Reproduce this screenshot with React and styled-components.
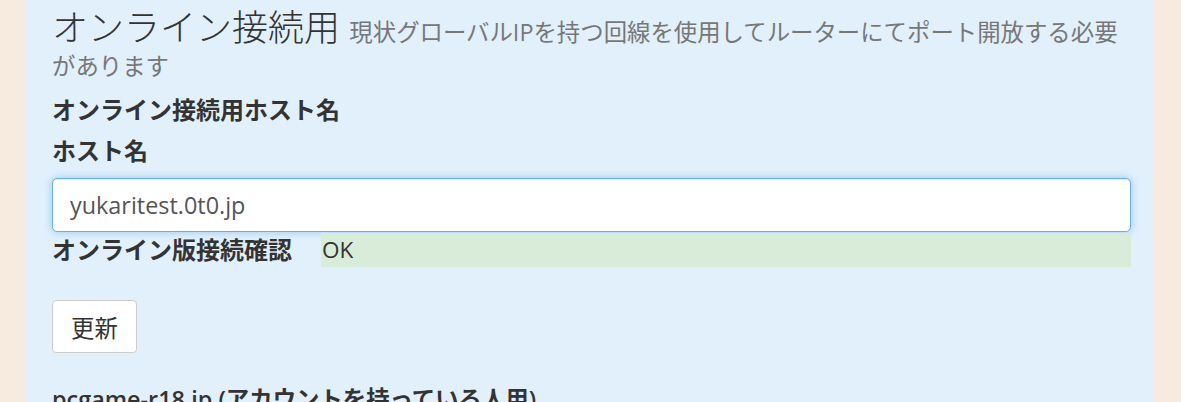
import React, { useEffect, useRef } from "react"
import styled, { createGlobalStyle } from 'styled-components'

const GlobalStyle = createGlobalStyle`
  body {
    margin: 0;
    background: #f7ebe0;
    font-family: "Open Sans", "Noto Sans CJK JP", sans-serif;
    color: #333;
  }
`

const Page = styled.div`
  padding: 0 28px 0 26px;
  height: 402px;
  overflow: hidden;
`

const Panel = styled.section`
  background: #e2f0fc;
  padding: 6px 22px 40px 26px;
  min-height: 402px;
  box-sizing: border-box;
`

const Title = styled.h1`
  margin: 0;
  font-size: 36px;
  font-weight: 300;
  line-height: 30px;
  padding-top: 7px;
  color: #333;
`

const Small = styled.small`
  font-size: 23.4px;
  color: #777;
  font-weight: 400;
`

const SectionLabel = styled.div`
  margin-top: 13px;
  font-size: 24px;
  font-weight: 700;
  line-height: 32px;
`

const FieldLabel = styled.label`
  display: block;
  margin-top: 9px;
  font-size: 24px;
  font-weight: 700;
  line-height: 32px;
`

const HostInput = styled.input`
  display: block;
  box-sizing: border-box;
  width: 100%;
  height: 54px;
  margin-top: 11px;
  padding: 10px 17px;
  font-family: "Open Sans", "Noto Sans CJK JP", sans-serif;
  font-size: 23.4px;
  color: #555;
  background: #fff;
  border: 1px solid #66afe9;
  border-radius: 5px;
  outline: none;
  caret-color: #333;
  box-shadow: inset 0 1px 1px rgba(0, 0, 0, .075), 0 0 8px rgba(102, 175, 233, .6);
`

const StatusRow = styled.div`
  display: grid;
  grid-template-columns: 269px 1fr;
  margin-top: 1px;
  align-items: stretch;
`

const StatusLabel = styled.div`
  font-size: 24px;
  font-weight: 700;
  line-height: 34px;
`

const StatusValue = styled.div`
  background: ${p => (p.ok ? '#d9ecd9' : '#f2dede')};
  font-size: 22.5px;
  line-height: 34px;
  padding-left: 1px;
  color: #333;
`

const Button = styled.button`
  display: block;
  margin-top: 33px;
  height: 53px;
  padding: 0 18px;
  font-family: "Open Sans", "Noto Sans CJK JP", sans-serif;
  font-size: 23.4px;
  color: #333;
  background: #fff;
  border: 1px solid #ccc;
  border-radius: 4px;
`

const SubHeading = styled.h3`
  margin: 30px 0 0;
  font-size: 23.4px;
  font-weight: 600;
  line-height: 32px;
  color: #333;
`

function App() {
  const inputRef = useRef(null)

  useEffect(() => {
    const el = inputRef.current
    if (el) {
      el.focus()
      el.setSelectionRange(1, 1)
    }
  }, [])

  return (
    <Page>
      <GlobalStyle />
      <Panel>
        <Title>
          オンライン接続用 <Small>現状グローバルIPを持つ回線を使用してルーターにてポート開放する必要があります</Small>
        </Title>
        <SectionLabel>オンライン接続用ホスト名</SectionLabel>
        <FieldLabel htmlFor="host">ホスト名</FieldLabel>
        <HostInput id="host" ref={inputRef} defaultValue="yukaritest.0t0.jp" />
        <StatusRow>
          <StatusLabel>オンライン版接続確認</StatusLabel>
          <StatusValue ok>OK</StatusValue>
        </StatusRow>
        <Button>更新</Button>
        <SubHeading>pcgame-r18.jp (アカウントを持っている人用)</SubHeading>
      </Panel>
    </Page>
  )
}

export default App
